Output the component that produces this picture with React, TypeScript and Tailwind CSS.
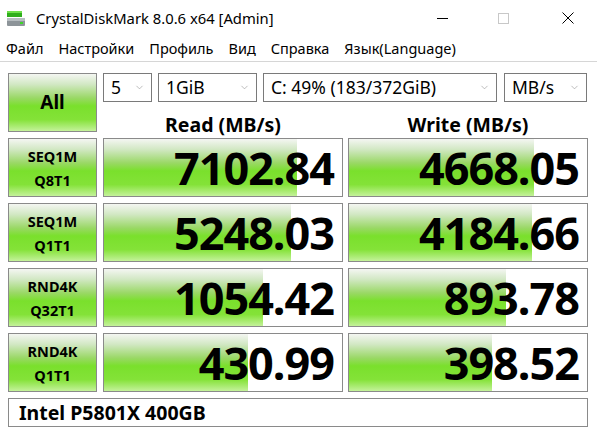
import { ChevronDown } from "lucide-react"

const rows = [
  { l1: "SEQ1M", l2: "Q8T1", read: "7102.84", write: "4668.05", rw: 193, ww: 185 },
  { l1: "SEQ1M", l2: "Q1T1", read: "5248.03", write: "4184.66", rw: 187, ww: 183 },
  { l1: "RND4K", l2: "Q32T1", read: "1054.42", write: "893.78", rw: 159, ww: 157 },
  { l1: "RND4K", l2: "Q1T1", read: "430.99", write: "398.52", rw: 144, ww: 143 },
]

const green = "bg-[linear-gradient(to_bottom,#f4f6f2_0%,#d2e8c4_18%,#9ad866_42%,#7ae02c_56%,#84e238_80%,#c4f29a_100%)]"
const font = "font-['Noto_Sans','Open_Sans',sans-serif]"

function Drop({ w, text }: { w: string; text: string }) {
  return (
    <div className={`${w} h-[29px] border border-[#7a7a7a] bg-white flex items-center justify-between pl-[7px] pr-[6px]`}>
      <span className="text-[17.5px] text-black leading-none">{text}</span>
      <ChevronDown size={11} strokeWidth={1.2} className="text-[#888]" />
    </div>
  )
}

function Cell({ value, bar }: { value: string; bar: number }) {
  return (
    <div className="relative w-[240px] h-[59px] border border-[#8a8a8a] bg-white">
      <div className={`absolute left-0 top-0 bottom-0 ${green}`} style={{ width: bar }} />
      <div className="relative h-full flex items-center justify-end pr-[8px] text-[45px] font-bold text-black leading-none tracking-[-1px]">
        {value}
      </div>
    </div>
  )
}

export default function App() {
  return (
    <div className={`w-[597px] h-[437px] bg-white overflow-hidden ${font}`}>
      {/* Title bar */}
      <div className="h-[36px] flex items-center">
        <svg width="20" height="20" viewBox="0 0 20 20" className="ml-[6px]">
          <rect x="1" y="3" width="15" height="6" fill="#2fae1c" />
          <rect x="1" y="3" width="15" height="2" fill="#6ee04a" />
          <rect x="1" y="10" width="18" height="8" rx="1" fill="#8d9499" />
          <rect x="1" y="10" width="18" height="3" fill="#b7bdc1" />
          <rect x="14" y="14" width="3" height="2" fill="#3ed62a" />
        </svg>
        <span className="ml-[10px] text-[14.8px] text-black">CrystalDiskMark 8.0.6 x64 [Admin]</span>
        <div className="ml-auto flex items-center h-full">
          <div className="w-[46px] h-full flex items-center justify-center">
            <div className="w-[11px] h-px bg-black" />
          </div>
          <div className="w-[56px] h-full flex items-center justify-center ml-[10px]">
            <div className="w-[11px] h-[11px] border border-[#c8c8c8]" />
          </div>
          <div className="w-[58px] h-full flex items-center justify-center ml-[8px]">
            <svg width="12" height="12" viewBox="0 0 12 12">
              <path d="M0.5 0.5 L11.5 11.5 M11.5 0.5 L0.5 11.5" stroke="#000" strokeWidth="1" />
            </svg>
          </div>
        </div>
      </div>

      {/* Menu */}
      <div className="h-[26px] flex items-center gap-[15px] pl-[6px] text-[14.5px] text-black border-b border-[#d6d6d6]">
        <span>Файл</span>
        <span>Настройки</span>
        <span>Профиль</span>
        <span>Вид</span>
        <span>Справка</span>
        <span>Язык(Language)</span>
      </div>

      {/* Body */}
      <div className="pl-[8px] pt-[11px] flex flex-col gap-[6px]">
        <div className="flex gap-[6px]">
          <div className={`w-[89px] h-[59px] border border-[#8a8a8a] ${green} flex items-center justify-center text-[19px] font-bold text-black`}>
            All
          </div>
          <div className="flex flex-col">
            <div className="flex gap-[6px]">
              <Drop w="w-[49px]" text="5" />
              <Drop w="w-[99px]" text="1GiB" />
              <Drop w="w-[234px]" text="C: 49% (183/372GiB)" />
              <div className="ml-px">
                <Drop w="w-[83px]" text="MB/s" />
              </div>
            </div>
            <div className="flex gap-[5px] h-[30px] pt-[11px]">
              <div className="w-[240px] text-center text-[19.5px] leading-[24px] font-bold text-black">Read (MB/s)</div>
              <div className="w-[240px] text-center text-[19.5px] leading-[24px] font-bold text-black">Write (MB/s)</div>
            </div>
          </div>
        </div>

        {rows.map((r, i) => (
          <div key={i} className="flex gap-[6px]">
            <div className={`w-[89px] h-[59px] border border-[#8a8a8a] ${green} flex flex-col items-center justify-center text-[14.5px] font-bold text-black leading-[24px]`}>
              <span>{r.l1}</span>
              <span>{r.l2}</span>
            </div>
            <div className="flex gap-[5px]">
              <Cell value={r.read} bar={r.rw} />
              <Cell value={r.write} bar={r.ww} />
            </div>
          </div>
        ))}

        <div className="w-[580px] h-[29px] border border-[#8a8a8a] bg-white flex items-center pl-[10px] text-[19.5px] font-bold text-black">
          Intel P5801X 400GB
        </div>
      </div>
    </div>
  )
}
